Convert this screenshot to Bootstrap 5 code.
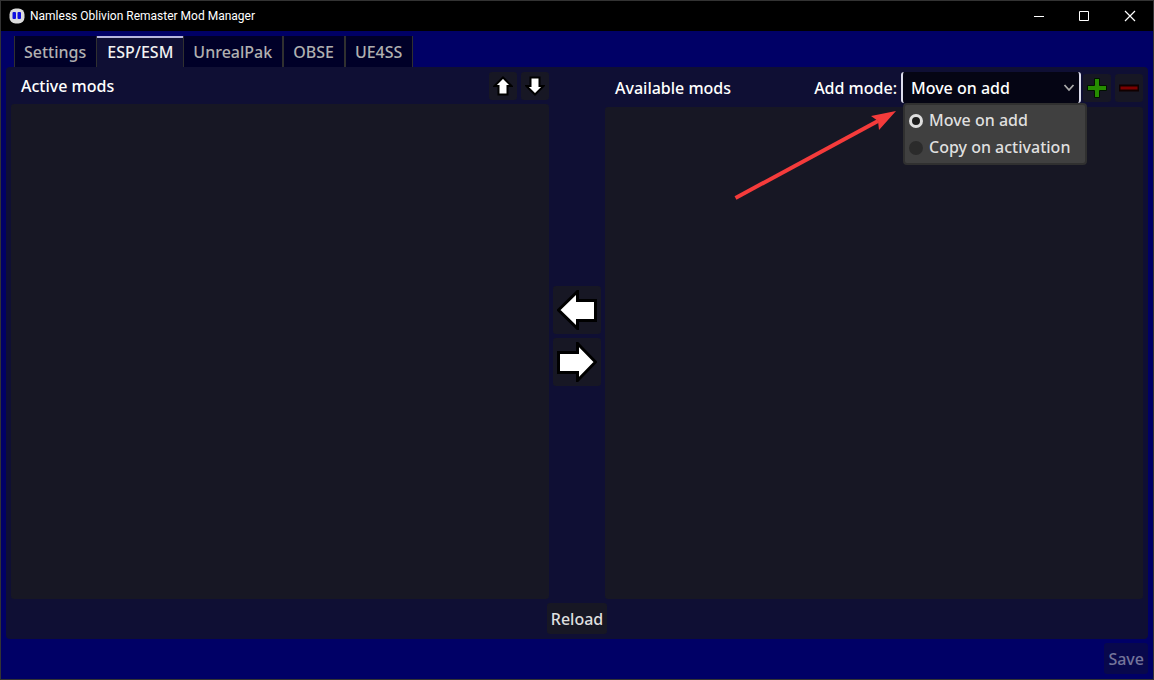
<!DOCTYPE html>
<html lang="en">
<head>
<meta charset="utf-8">
<meta name="viewport" content="width=device-width, initial-scale=1">
<title>Namless Oblivion Remaster Mod Manager</title>
<link rel="stylesheet" href="https://cdn.jsdelivr.net/npm/bootstrap@5.3.0/dist/css/bootstrap.min.css">
<style>
  body { background: #000066; color: #fff; font: 500 16px/23px "Noto Sans", "Open Sans", sans-serif; border: 1px solid #333; }
  button, select, input { font: inherit; }
  .titlebar { height: 30px; background: #000; }
  .app-name { font: 400 12px/16px Roboto, sans-serif; padding-left: 5px; }
  .win-btn { width: 46px; height: 30px; padding: 0; border: 0; background: none; color: #fff; }
  .workspace { padding: 5px; }
  .nav-tabs { border: 0; margin-left: 8px; }
  .nav-tabs .nav-link { height: 31px; padding: 2px 10px 0 9px; margin: 0; border: solid #303030; border-width: 0 1px; border-radius: 0; background: #000028; color: #b0b0b0; }
  .nav-tabs .nav-link.active { padding: 0 10px; border: solid #b6b6dc; border-width: 2px 0 0; background: #0f0f34; color: #f2f2f2; }
  .panel { background: #0f0f34; border-radius: 4px; padding: 5px; }
  .mods { flex: 1 1 0; min-width: 0; }
  .mod-list { background: #171724; border-radius: 3px; }
  .tool { display: grid; place-items: center; background: #171724; border: 0; border-radius: 3px; padding: 0; width: 28px; height: 28px; }
  .tool-lg { width: 48px; height: 48px; }
  .left-head { padding-left: 10px; height: 28px; }
  .right-head { padding-left: 10px; height: 31px; }
  .right-head > span, .right-head > label { padding-top: 2px; }
  .text-btn { background: #171724; color: #dfdfdf; border: 0; border-radius: 3px; padding: 2px 4px 0; height: 31px; }
  .text-btn:disabled { background: #08084c; color: #74749a; }
  .mode { width: 180px; margin-right: 2px; }
  .mode select { appearance: none; width: 100%; height: 31px; padding: 2px 8px 0; color: #fff; background: #050514; border: solid #dcdcec; border-width: 0 2px; border-radius: 3px; outline: 0; }
  .chevron { right: 6px; top: 11px; }
  .mode-menu { top: 31px; left: 2px; width: 184px; height: 62px; padding: 2px 4px; background: #404040; border: 2px solid #303030; border-radius: 4px; color: #dfdfdf; z-index: 3; }
  .mode-menu label { height: 27px; gap: 6px; }
  .mode-menu input { appearance: none; flex: none; width: 14px; height: 14px; margin: 0; border-radius: 50%; background: #2b2b2b; }
  .mode-menu input:checked { background: #1c1c1c; border: 3px solid #dedede; }
  .pointer { right: 183px; top: 36px; z-index: 2; pointer-events: none; }
</style>
<script src="https://cdn.jsdelivr.net/npm/bootstrap@5.3.0/dist/js/bootstrap.bundle.min.js" defer></script>
</head>
<body class="d-flex flex-column min-vh-100">
<header class="titlebar d-flex align-items-center ps-2">
  <svg width="16" height="16" viewBox="0 0 16 16" aria-hidden="true"><rect x=".5" y=".5" width="15" height="15" rx="6" fill="#dcdcdc"/><rect x="3.500" y="4" width="3.500" height="7" rx="1" fill="#1010e0"/><rect x="8.500" y="4" width="3.500" height="7" rx="1" fill="#1010e0"/></svg>
  <span class="app-name me-auto">Namless Oblivion Remaster Mod Manager</span>
  <button class="win-btn" aria-label="Minimize"><svg width="12" height="12" class="d-block mx-auto"><path d="M2 6.500H12" stroke="#fff"/></svg></button>
  <button class="win-btn" aria-label="Maximize"><svg width="12" height="12" class="d-block mx-auto"><path d="M1.500 1.500H10.500V10.500H1.500Z" fill="none" stroke="#fff"/></svg></button>
  <button class="win-btn" aria-label="Close"><svg width="12" height="12" class="d-block mx-auto"><path d="M1 1L11 11M11 1L1 11" stroke="#fff" stroke-width="1.200"/></svg></button>
</header>
<main class="workspace d-flex flex-column flex-fill">
  <nav class="nav nav-tabs" role="tablist">
    <button class="nav-link" role="tab">Settings</button>
    <button class="nav-link active" role="tab" aria-selected="true">ESP/ESM</button>
    <button class="nav-link" role="tab">UnrealPak</button>
    <button class="nav-link" role="tab">OBSE</button>
    <button class="nav-link" role="tab">UE4SS</button>
  </nav>
  <section class="panel d-flex flex-column flex-fill gap-1">
    <div class="d-flex flex-fill gap-1">
      <div class="mods d-flex flex-column gap-1">
        <div class="left-head d-flex align-items-center gap-1">
          <span class="me-auto">Active mods</span>
          <button class="tool" aria-label="Move up"><svg width="20" height="20" viewBox="0 0 20 20"><path d="M10 1.500L18.500 10H14.500V18.500H5.500V10H1.500Z" fill="#fff" stroke="#000" stroke-width="2"/></svg></button>
          <button class="tool" aria-label="Move down"><svg width="20" height="20" viewBox="0 0 20 20"><path d="M10 18.500L18.500 10H14.500V1.500H5.500V10H1.500Z" fill="#fff" stroke="#000" stroke-width="2"/></svg></button>
        </div>
        <div class="mod-list flex-fill"></div>
      </div>
      <div class="d-flex flex-column justify-content-center gap-1">
        <button class="tool tool-lg" aria-label="Activate"><svg width="40" height="40" viewBox="0 0 40 40"><path d="M1.500 20L20.500 1.500V10.500H38.500V30.500H20.500V38.500Z" fill="#fff" stroke="#000" stroke-width="3"/></svg></button>
        <button class="tool tool-lg" aria-label="Deactivate"><svg width="40" height="40" viewBox="0 0 40 40"><path d="M38.500 20L20.500 1.500V10.500H1.500V30.500H20.500V38.500Z" fill="#fff" stroke="#000" stroke-width="3"/></svg></button>
      </div>
      <div class="mods d-flex flex-column gap-1">
        <div class="right-head d-flex align-items-center">
          <span class="me-auto">Available mods</span>
          <label for="mode" class="pe-1">Add mode:</label>
          <div class="mode position-relative">
            <select id="mode"><option>Move on add</option><option>Copy on activation</option></select>
            <svg class="chevron position-absolute" width="12" height="10" viewBox="0 0 12 10" fill="none" stroke="#aaa" stroke-width="1.800"><path d="M1.500 2L6 7L10.500 2"/></svg>
            <div class="mode-menu position-absolute" role="group" aria-label="Add mode">
              <label class="d-flex align-items-center"><input type="radio" name="add-mode" checked>Move on add</label>
              <label class="d-flex align-items-center"><input type="radio" name="add-mode">Copy on activation</label>
            </div>
            <svg class="pointer position-absolute" width="164" height="94" viewBox="0 0 164 94" aria-hidden="true"><path d="M1.500 90L144 13" stroke="#f53b3b" stroke-width="4"/><path d="M162 3L145 22L144 13L137 8Z" fill="#f53b3b"/></svg>
          </div>
          <div class="d-flex gap-1">
            <button class="tool" aria-label="Add mod"><svg width="20" height="20" viewBox="0 0 20 20"><path d="M7.500 .5H12.500V7.500H19.500V12.500H12.500V19.500H7.500V12.500H.5V7.500H7.500Z" fill="#268c00" stroke="#001000"/></svg></button>
            <button class="tool" aria-label="Remove mod"><svg width="20" height="20" viewBox="0 0 20 20"><path d="M.5 7.500H19.500V12.500H.5Z" fill="#7c0000" stroke="#100000" stroke-width="2"/></svg></button>
          </div>
        </div>
        <div class="mod-list flex-fill"></div>
      </div>
    </div>
    <button class="text-btn align-self-center">Reload</button>
  </section>
  <button class="text-btn align-self-end mt-1" disabled>Save</button>
</main>
</body>
</html>
